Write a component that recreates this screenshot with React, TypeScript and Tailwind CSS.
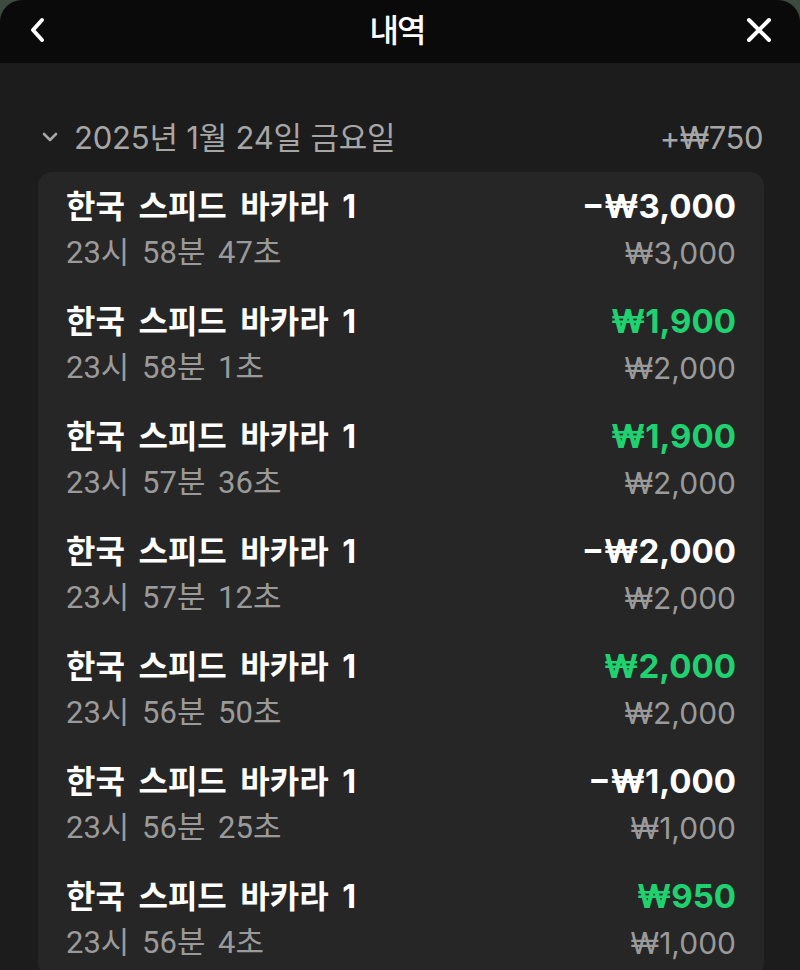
import React from "react";

type Row = { time: string; amount: string; bet: string; win: boolean };

const rows: Row[] = [
  { time: "23시 58분 47초", amount: "−₩3,000", bet: "₩3,000", win: false },
  { time: "23시 58분 1초", amount: "₩1,900", bet: "₩2,000", win: true },
  { time: "23시 57분 36초", amount: "₩1,900", bet: "₩2,000", win: true },
  { time: "23시 57분 12초", amount: "−₩2,000", bet: "₩2,000", win: false },
  { time: "23시 56분 50초", amount: "₩2,000", bet: "₩2,000", win: true },
  { time: "23시 56분 25초", amount: "−₩1,000", bet: "₩1,000", win: false },
  { time: "23시 56분 4초", amount: "₩950", bet: "₩1,000", win: true },
];

const font = { fontFamily: '"Inter", "Noto Sans CJK KR", sans-serif' };
const timeFont = { fontFamily: '"Roboto", "Noto Sans CJK KR", sans-serif' };

export default function App() {
  return (
    <div
      className="w-[800px] h-[970px] bg-[#3d4a40] overflow-hidden flex flex-col"
      style={font}
    >
      <div className="h-[63px] shrink-0 bg-[#0a0a0a] rounded-t-[22px] flex items-center justify-between px-[26px]">
        <svg width="24" height="32" viewBox="0 0 24 32" className="mt-[-4px]">
          <path d="M16 6 L7 16 L16 26" stroke="white" strokeWidth="4" fill="none" strokeLinecap="round" strokeLinejoin="round" />
        </svg>
        <div className="text-white text-[32px] font-medium leading-none tracking-[-2px] mt-[-8px]" style={{ fontFamily: '"Noto Sans CJK KR", sans-serif' }}>내역</div>
        <svg width="30" height="30" viewBox="0 0 30 30" className="mt-[-4px]">
          <path d="M5 5 L25 25 M25 5 L5 25" stroke="white" strokeWidth="4" fill="none" strokeLinecap="round" />
        </svg>
      </div>
      <div className="flex-1 bg-[#1c1c1c] pt-[51px]">
        <div className="h-[46px] flex items-center justify-between pl-[40px] pr-[37px]">
          <div className="flex items-center gap-[14px] text-[#a6a6a6]">
            <svg width="20" height="14" viewBox="0 0 20 14">
              <path d="M4 4 L10 10 L16 4" stroke="#a6a6a6" strokeWidth="2.6" fill="none" strokeLinecap="round" strokeLinejoin="round" />
            </svg>
            <span className="text-[31px] leading-none tracking-[-0.2px]">2025년 1월 24일 금요일</span>
          </div>
          <span className="text-[31px] leading-none text-[#a6a6a6] tracking-[-0.5px]">+₩750</span>
        </div>
        <div className="mt-[12px] ml-[38px] mr-[36px] bg-[#262626] rounded-[14px] px-[28px]">
          {rows.map((r, i) => (
            <div key={i} className="h-[115px] pt-[12px] flex justify-between">
              <div className="flex flex-col">
                <div className="h-[46px] flex items-center text-white text-[32px] font-bold [word-spacing:6px]">한국 스피드 바카라 1</div>
                <div className="h-[46px] flex items-center text-[#9a9a9a] text-[31px] [word-spacing:5px]" style={timeFont}>{r.time}</div>
              </div>
              <div className="flex flex-col items-end">
                <div className={`h-[46px] flex items-center text-[33px] font-bold ${r.win ? "text-[#1fd16f]" : "text-white"}`}>{r.amount}</div>
                <div className="h-[46px] flex items-center text-[#9a9a9a] text-[30px]">{r.bet}</div>
              </div>
            </div>
          ))}
        </div>
      </div>
    </div>
  );
}
